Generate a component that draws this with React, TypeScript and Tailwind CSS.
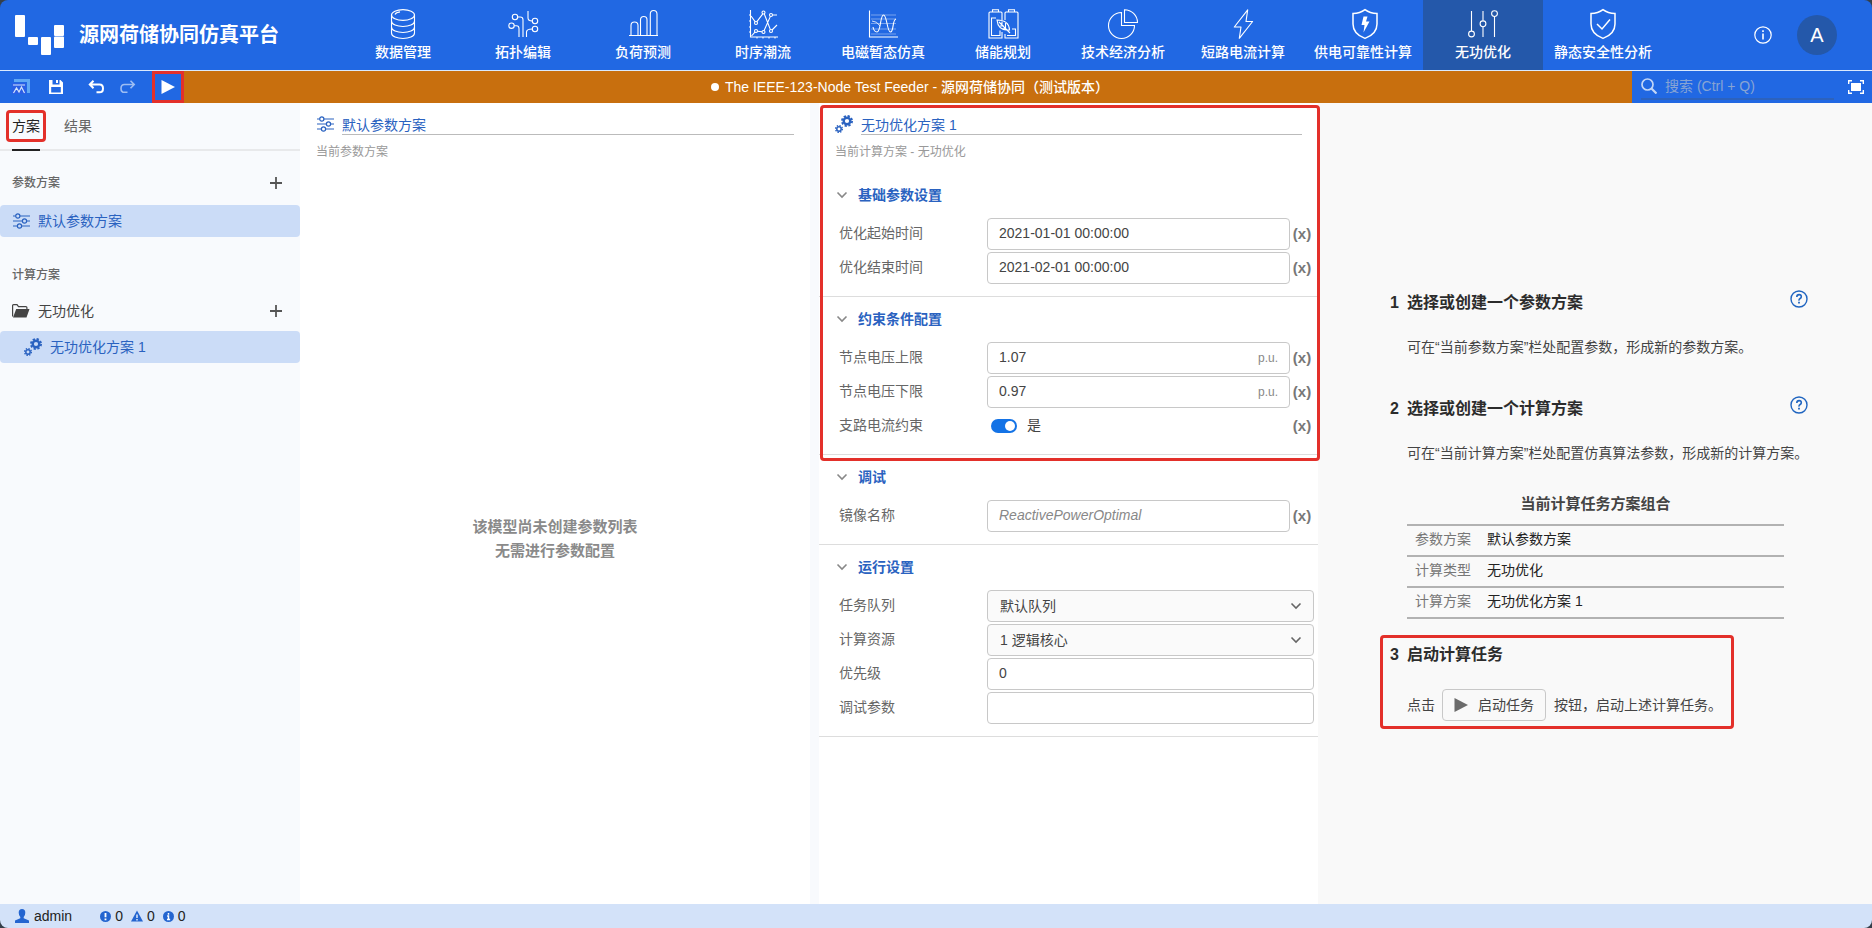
import { useState } from "react";
import type { ReactNode } from "react";

interface IconProps {
  className?: string;
}

const SlidersIcon = ({ className }: IconProps) => (
  <svg viewBox="0 0 18 18" fill="none" stroke="currentColor" strokeWidth="1.2" className={className}>
    <path d="M1 4h2.5M8 4h10M1 9h9M15 9h3M1 14h4M10 14h8" />
    <circle cx="5.8" cy="4" r="2.1" />
    <circle cx="12.5" cy="9" r="2.1" />
    <circle cx="7.5" cy="14" r="2.1" />
  </svg>
);

const GearsIcon = ({ className }: IconProps) => (
  <svg viewBox="0 0 18 18" fill="none" stroke="currentColor" className={className}>
    <circle cx="12" cy="6" r="3.3" strokeWidth="2.4" />
    <circle cx="12" cy="6" r="5.1" strokeWidth="1.8" strokeDasharray="2.3 1.705" />
    <circle cx="4" cy="14" r="2.2" strokeWidth="1.5" />
    <circle cx="4" cy="14" r="3.4" strokeWidth="1.3" strokeDasharray="1.4 1.27" />
  </svg>
);

const FolderIcon = ({ className }: IconProps) => (
  <svg viewBox="0 0 18 14" className={className}>
    <path d="M.6 12.5V1.6q0-1 1-1H5l1.500 2h7.400q1 0 1 1V5" fill="none" stroke="currentColor" strokeWidth="1.2" />
    <path d="M4.200 5H17.500L14.500 13.400H1z" fill="currentColor" />
  </svg>
);

const ChevronIcon = ({ className }: IconProps) => (
  <svg viewBox="0 0 12 8" fill="none" stroke="currentColor" strokeWidth="1.6" className={className}>
    <path d="M1.500 1.500 6 6l4.500-4.500" />
  </svg>
);

const PlusIcon = ({ className }: IconProps) => (
  <svg viewBox="0 0 12 12" stroke="currentColor" strokeWidth="1.8" className={className}>
    <path d="M6 0v12M0 6h12" />
  </svg>
);

const PlayIcon = ({ className }: IconProps) => (
  <svg viewBox="0 0 14 14" fill="currentColor" className={className}>
    <path d="M.5 0 14 7 .5 14z" />
  </svg>
);

const HelpIcon = ({ className }: IconProps) => (
  <svg viewBox="0 0 18 18" fill="none" stroke="currentColor" className={className}>
    <circle cx="9" cy="9" r="8" strokeWidth="1.4" />
    <path d="M6.800 7q0-2.400 2.300-2.400T11.300 6.700q0 1.100-1.200 1.800T9 10.600" strokeWidth="1.6" />
    <path d="M9 11.800v1.800" strokeWidth="1.8" />
  </svg>
);

const shield = "M15 .7Q20 4.500 27 4.500V15q0 10-12 14.400Q3 25 3 15V4.500Q10 4.500 15 .7z";

const modules: { label: string; icon: ReactNode }[] = [
  {
    label: "数据管理",
    icon: (
      <>
        <ellipse cx="15" cy="6" rx="11.5" ry="5.4" />
        <path d="M3.500 6v18c0 7.300 23 7.300 23 0V6M3.500 12c0 7.300 23 7.300 23 0M3.500 18c0 7.300 23 7.300 23 0" />
        <path d="M7 5.500q1-2 5-2.600" />
      </>
    ),
  },
  {
    label: "拓扑编辑",
    icon: (
      <>
        <circle cx="7" cy="8" r="2.7" />
        <circle cx="3.5" cy="16.7" r="2.7" />
        <circle cx="27" cy="12" r="2.7" />
        <circle cx="27" cy="20" r="2.7" />
        <path d="M9.700 8h2.500q2.800 0 2.800 2.800V28M6.200 16.700h2.300q2.500 0 2.500 2.800V28M20 2v7q0 3 4.300 3M18.500 28v-5q0-3 5.800-3" />
      </>
    ),
  },
  {
    label: "负荷预测",
    icon: (
      <path d="M1 26.500h29M3 26V16.500q0-3.500 3.500-3.500t3.500 3.500V26M12.500 26V11q0-3.500 3.300-3.500T19 11v15M22.300 26V5q0-3.500 3.300-3.500T29 5v21" />
    ),
  },
  {
    label: "时序潮流",
    icon: (
      <>
        <path d="M2.500 1v27H30M1 6h1.500M1 12h1.500M1 18h1.500M1 23h1.500M9 28v1.500M15 28v1.500M21 28v1.500M27 28v1.500" />
        <path d="M3 7l4.300 5.800M8.700 12.800 14.800 4.800M16.200 4.800l6.200 15.800M24 21l5-5M3.500 27l3.700-4.200M9.500 22.300l4.500.5M16 21.700l6.400-14.300M24.500 6H29" />
        <circle cx="8" cy="14" r="1.5" />
        <circle cx="15.5" cy="3.5" r="1.5" />
        <circle cx="23" cy="22" r="1.5" />
        <circle cx="8" cy="22" r="1.5" />
        <circle cx="15.5" cy="23" r="1.5" />
        <circle cx="23" cy="6" r="1.5" />
      </>
    ),
  },
  {
    label: "电磁暂态仿真",
    icon: (
      <>
        <path d="M1.500 1.500V28H30" />
        <path d="M3 6h25M3 10h25M3 14.500h25M3 20h25M3 25h25" strokeWidth=".4" />
        <path d="M5 18q1 5 4 5c4 0 3-17 6.500-17S19 23 22.500 23C26 23 24 11 28 10" />
        <path d="M4 12q5 0 8 5" strokeWidth=".8" />
      </>
    ),
  },
  {
    label: "储能规划",
    icon: (
      <>
        <path d="M14 11V4q0-1-1-1H2Q1 3 1 4v25h13v-6M4.500 3V.7h6V3M17 11V4q0-1 1-1h11q1 0 1 1v25H17v-4M20.500 3V.7h6V3" />
        <path d="M8 9H3.500v17.500H12v-5M19 26.500h8.500V20H24" />
        <path d="M9 11q12 0 12.500 10Q10 22 9 11zM11 13l11 11M14 12.500v4M12 17h4M17.500 14v5M14.500 19.700h4" />
      </>
    ),
  },
  {
    label: "技术经济分析",
    icon: <path d="M13.500 3.500a13 13 0 1 0 13 13h-13zM16.500.7A13 13 0 0 1 29.500 13.500h-13z" />,
  },
  {
    label: "短路电流计算",
    icon: <path d="M19.700.8 6.300 18H13l-1.700 11.300L24.600 12.500H18z" strokeLinejoin="round" />,
  },
  {
    label: "供电可靠性计算",
    icon: (
      <g transform="translate(2 0)">
        <path d={shield} strokeWidth="1.5" />
        <path d="M13.500 7.500h4L16 12.500h3.500L13.500 23.500l1-7.500H11.500z" fill="currentColor" stroke="none" />
      </g>
    ),
  },
  {
    label: "无功优化",
    icon: (
      <>
        <path d="M3.500 2v20M15 2v9.800M15 17.800V28M26.500 7.500V28" />
        <circle cx="3.5" cy="25" r="2.9" />
        <circle cx="15" cy="14.8" r="2.9" />
        <circle cx="26.5" cy="4.6" r="2.9" />
      </>
    ),
  },
  {
    label: "静态安全性分析",
    icon: (
      <>
        <path d={shield} strokeWidth="1.5" />
        <path d="m9 15 5 5 8-9.500" strokeWidth="1.5" />
      </>
    ),
  },
];

const Header = () => {
  const [active, setActive] = useState("无功优化");
  return (
    <header className="flex h-[71px] items-stretch justify-between border-b border-blue-100 bg-[#2168e3] text-white">
      <div className="flex w-[343px] items-center pl-[15px]">
        <svg viewBox="0 0 50 41" className="h-[41px] w-[50px]" fill="currentColor">
          <rect x="0" y="0" width="10" height="22" rx="1" />
          <rect x="13" y="22" width="10" height="8" rx="1" />
          <rect x="26" y="22" width="10" height="18" rx="1" />
          <rect x="39" y="10" width="10" height="11" rx="1" />
          <rect x="39" y="21.5" width="10" height="11.5" rx="1" />
        </svg>
        <h1 className="ml-3.5 text-xl font-bold">源网荷储协同仿真平台</h1>
      </div>
      <nav className="flex">
        {modules.map(({ label, icon }) => (
          <button
            key={label}
            type="button"
            onClick={() => setActive(label)}
            className={`flex w-[120px] flex-col items-center pt-[9px] ${
              active === label ? "bg-[#2458aa]" : "hover:bg-[#2458aa]/50"
            }`}
          >
            <svg viewBox="0 0 30 30" fill="none" stroke="currentColor" strokeWidth="1.1" className="size-[30px] overflow-visible">
              {icon}
            </svg>
            <span className="mt-[3px] text-sm font-medium">{label}</span>
          </button>
        ))}
      </nav>
      <div className="flex w-[209px] items-center justify-end gap-[25px] pr-[35px]">
        <button type="button" aria-label="关于">
          <svg viewBox="0 0 18 18" fill="none" stroke="currentColor" className="size-[18px]">
            <circle cx="9" cy="9" r="8.2" strokeWidth="1.2" />
            <path d="M9 7.500v6M9 4.300v1.800" strokeWidth="1.6" />
          </svg>
        </button>
        <button type="button" className="size-10 rounded-full bg-[#2458aa] text-xl">
          A
        </button>
      </div>
    </header>
  );
};

const Toolbar = () => (
  <div className="flex h-8 bg-[#c86f0e] text-white">
    <div className="flex w-[184px] items-center bg-[#2168e3] pl-3">
      <button type="button" aria-label="应用">
        <svg viewBox="0 0 18 16" className="h-4 w-[18px]">
          <path d="M2 0h16v14h-3V3H2z" fill="#5fa8f5" />
          <path d="M0 4h14v11H0z" fill="#2a5fe6" />
          <path d="M1 6h12M1.500 14l3-5 2.500 4 2.500-5 3 6" fill="none" stroke="#d5e4fb" strokeWidth="1.2" />
        </svg>
      </button>
      <button type="button" aria-label="保存" className="ml-[19px]">
        <svg viewBox="0 0 14 14" fill="currentColor" className="size-3.5">
          <path
            fillRule="evenodd"
            d="M0 0h11.500L14 2.500V14H0zM3.500 0v4.500h7V0H9v3H7V0zM2.200 7v5.500h9.600V7z"
          />
        </svg>
      </button>
      <button type="button" aria-label="撤销" className="ml-[25px]">
        <svg viewBox="0 0 16 14" fill="none" stroke="currentColor" strokeWidth="2" className="h-3.5 w-4">
          <path d="M5.500.8 1.800 4.500l3.700 3.700M2 4.500h9.500q3.500 0 3.500 3.900t-3.500 3.900H8.500" />
        </svg>
      </button>
      <button type="button" aria-label="重做" className="ml-4">
        <svg viewBox="0 0 16 14" fill="none" stroke="#9dbdf3" strokeWidth="1.6" className="h-3.5 w-4">
          <path d="M10.500.8l3.700 3.700-3.700 3.700M14 4.500H4.500Q1 4.500 1 8.400t3.500 3.900h3" />
        </svg>
      </button>
      <button
        type="button"
        aria-label="启动任务"
        className="ml-auto flex h-8 w-8 items-center justify-center border-[3px] border-[#e3302a]"
      >
        <PlayIcon className="size-3.5" />
      </button>
    </div>
    <div className="flex min-w-0 flex-1 items-center justify-center gap-1.5 pl-1 text-sm">
      <span className="size-2 rounded-full bg-white" />
      <span className="font-medium">The IEEE-123-Node Test Feeder - 源网荷储协同（测试版本）</span>
    </div>
    <div className="flex w-60 items-center bg-[#2168e3] pr-2 pl-[9px]">
      <label className="flex min-w-0 flex-1 items-center gap-2 border-b-2 border-[#2c62bd]">
        <svg viewBox="0 0 16 16" fill="none" stroke="#c3d6f6" strokeWidth="1.7" className="size-4 shrink-0">
          <circle cx="6.5" cy="6.5" r="5.5" />
          <path d="m10.500 10.500 5 5" strokeWidth="2.2" />
        </svg>
        <input
          type="search"
          aria-label="搜索"
          placeholder="搜索 (Ctrl + Q)"
          className="h-6 min-w-0 flex-1 bg-transparent text-sm outline-none placeholder:text-[#88a4d3]"
        />
      </label>
      <button type="button" aria-label="全屏" className="ml-3.5 shrink-0">
        <svg viewBox="0 0 16 14" fill="none" stroke="currentColor" strokeWidth="1.4" className="h-3.5 w-4">
          <path d="M.7 4V.7H4M12 .7h3.300V4M15.300 10v3.300H12M4 13.300H.7V10" />
          <rect x="3" y="3" width="10" height="8" fill="currentColor" stroke="none" />
        </svg>
      </button>
    </div>
  </div>
);

const Sidebar = () => (
  <aside className="bg-[#f8fafd] text-sm text-[#444]">
    <div className="flex h-12 gap-6 border-b-2 border-[#e8e9eb] pl-3">
      <button type="button" className="relative -mb-0.5 border-b-2 border-[#222] text-[#222]">
        方案
        <span className="pointer-events-none absolute -inset-x-1.5 top-[7px] h-8 rounded-sm border-[3px] border-[#e3302a]" />
      </button>
      <button type="button" className="text-[#666]">
        结果
      </button>
    </div>
    <div className="mt-4 flex h-8 items-center justify-between pr-[18px] pl-3">
      <h2 className="text-xs font-medium text-[#666]">参数方案</h2>
      <button type="button" aria-label="新建参数方案">
        <PlusIcon className="size-3 text-[#555]" />
      </button>
    </div>
    <button type="button" className="mt-1.5 flex h-8 w-full items-center gap-2 rounded bg-[#cbdcf7] pl-3 text-[#2a62c0]">
      <SlidersIcon className="size-[18px]" />
      默认参数方案
    </button>
    <h2 className="mt-[22px] flex h-8 items-center pl-3 text-xs font-medium text-[#666]">计算方案</h2>
    <div className="mt-1 flex h-8 items-center justify-between pr-[18px] pl-3">
      <button type="button" className="flex items-center gap-2">
        <FolderIcon className="h-3.5 w-[18px]" />
        无功优化
      </button>
      <button type="button" aria-label="新建计算方案">
        <PlusIcon className="size-3 text-[#555]" />
      </button>
    </div>
    <button type="button" className="mt-1 flex h-8 w-full items-center gap-2 rounded bg-[#cbdcf7] pl-6 text-[#2a62c0]">
      <GearsIcon className="size-[18px]" />
      无功优化方案 1
    </button>
  </aside>
);

interface PanelTitleProps {
  icon: ReactNode;
  label: string;
  name: string;
  note: string;
}

const PanelTitle = ({ icon, label, name, note }: PanelTitleProps) => (
  <div className="h-[70px] px-4 pt-2.5">
    <div className="flex items-center gap-2 text-[#2a62c0]">
      {icon}
      <input
        aria-label={label}
        defaultValue={name}
        className="h-[22px] min-w-0 flex-1 border-b border-[#bbb] text-sm outline-none"
      />
    </div>
    <p className="mt-[7px] text-xs leading-5 text-[#999]">{note}</p>
  </div>
);

interface SectionProps {
  title: string;
  children: ReactNode;
}

const Section = ({ title, children }: SectionProps) => (
  <section className="border-b border-[#ddd] pt-1.5 pr-1 pb-3">
    <button type="button" className="mb-[7px] flex h-8 items-center gap-2.5 pl-[17px]">
      <ChevronIcon className="h-2 w-3 text-[#888]" />
      <span className="text-sm font-bold text-[#2a62c0]">{title}</span>
    </button>
    <div className="flex flex-col gap-0.5 pl-5">{children}</div>
  </section>
);

interface FieldProps {
  id: string;
  label: string;
  value?: string;
  placeholder?: string;
  unit?: string;
  expr?: boolean;
}

const ExprButton = () => (
  <button type="button" aria-label="表达式" className="w-6 shrink-0 text-center text-[15px] font-bold text-[#777]">
    (x)
  </button>
);

const Field = ({ id, label, value, placeholder, unit, expr }: FieldProps) => (
  <div className="flex h-8 items-center">
    <label htmlFor={id} className="w-[148px] shrink-0 pb-0.5 text-sm text-[#666]">
      {label}
    </label>
    <div className="flex h-8 min-w-0 flex-1 items-center rounded border border-[#c8c8c8] bg-white px-[11px]">
      <input
        id={id}
        defaultValue={value}
        placeholder={placeholder}
        className="h-full min-w-0 flex-1 pb-0.5 text-sm text-[#444] outline-none placeholder:text-[#888] placeholder:italic"
      />
      {unit && <span className="text-xs text-[#888]">{unit}</span>}
    </div>
    {expr && <ExprButton />}
  </div>
);

const SelectField = ({ id, label, value }: { id: string; label: string; value: string }) => (
  <div className="flex h-8 items-center">
    <label htmlFor={id} className="w-[148px] shrink-0 pb-0.5 text-sm text-[#666]">
      {label}
    </label>
    <div className="relative flex-1">
      <select
        id={id}
        className="block h-8 w-full appearance-none rounded border border-[#c8c8c8] bg-[#fafafa] px-3 text-sm text-[#444]"
      >
        <option>{value}</option>
      </select>
      <ChevronIcon className="pointer-events-none absolute top-3 right-3 h-2 w-3 text-[#666]" />
    </div>
  </div>
);

const ToggleField = ({ id, label }: { id: string; label: string }) => {
  const [on, setOn] = useState(true);
  return (
    <div className="flex h-8 items-center">
      <label htmlFor={id} className="w-[152px] shrink-0 pb-0.5 text-sm text-[#666]">
        {label}
      </label>
      <input
        id={id}
        type="checkbox"
        checked={on}
        onChange={() => setOn(!on)}
        className="h-3.5 w-[26px] appearance-none rounded-full bg-[#aaa] before:m-0.5 before:block before:size-2.5 before:rounded-full before:bg-white checked:bg-[#1473e6] checked:before:ml-3.5"
      />
      <span className="ml-2.5 flex-1 pb-0.5 text-sm text-[#444]">{on ? "是" : "否"}</span>
      <ExprButton />
    </div>
  );
};

const ParamPanel = () => (
  <section className="flex flex-col border-r-[9px] border-[#f8fafd] bg-white">
    <PanelTitle
      icon={<SlidersIcon className="size-[18px]" />}
      label="参数方案名称"
      name="默认参数方案"
      note="当前参数方案"
    />
    <div className="flex flex-1 flex-col items-center justify-center text-[15px] leading-6 font-bold text-[#8a8a8a]">
      <p>该模型尚未创建参数列表</p>
      <p>无需进行参数配置</p>
    </div>
  </section>
);

const JobPanel = () => (
  <section className="bg-white">
    <div className="relative">
      <PanelTitle
        icon={<GearsIcon className="size-[18px]" />}
        label="计算方案名称"
        name="无功优化方案 1"
        note="当前计算方案 - 无功优化"
      />
      <Section title="基础参数设置">
        <Field id="start" label="优化起始时间" value="2021-01-01 00:00:00" expr />
        <Field id="end" label="优化结束时间" value="2021-02-01 00:00:00" expr />
      </Section>
      <Section title="约束条件配置">
        <Field id="vmax" label="节点电压上限" value="1.07" unit="p.u." expr />
        <Field id="vmin" label="节点电压下限" value="0.97" unit="p.u." expr />
        <ToggleField id="branch" label="支路电流约束" />
      </Section>
      <div className="pointer-events-none absolute top-0.5 -right-0.5 -bottom-1.5 left-px rounded-sm border-[3px] border-[#e3302a]" />
    </div>
    <Section title="调试">
      <Field id="image" label="镜像名称" placeholder="ReactivePowerOptimal" expr />
    </Section>
    <Section title="运行设置">
      <SelectField id="queue" label="任务队列" value="默认队列" />
      <SelectField id="cpu" label="计算资源" value="1 逻辑核心" />
      <Field id="priority" label="优先级" value="0" />
      <Field id="args" label="调试参数" />
    </Section>
  </section>
);

const summary = [
  ["参数方案", "默认参数方案"],
  ["计算类型", "无功优化"],
  ["计算方案", "无功优化方案 1"],
];

const StepTitle = ({ step, title, help }: { step: number; title: string; help?: boolean }) => (
  <div className="flex h-6 items-center text-base font-bold text-[#2c2c2c]">
    <span className="w-[17px]">{step}</span>
    <h3 className="flex-1">{title}</h3>
    {help && (
      <button type="button" aria-label="帮助" className="mb-2">
        <HelpIcon className="size-[18px] text-[#2065c0]" />
      </button>
    )}
  </div>
);

const Guide = () => (
  <section className="flex flex-col justify-center bg-[#f9f9f9] pt-1 pr-16 pl-[72px] text-sm text-[#444]">
    <StepTitle step={1} title="选择或创建一个参数方案" help />
    <p className="mt-[22px] pl-[17px] whitespace-nowrap">可在“当前参数方案”栏处配置参数，形成新的参数方案。</p>
    <div className="mt-10">
      <StepTitle step={2} title="选择或创建一个计算方案" help />
    </div>
    <p className="mt-[22px] pl-[17px] whitespace-nowrap">可在“当前计算方案”栏处配置仿真算法参数，形成新的计算方案。</p>
    <div className="mt-[31px] pr-6 pl-[17px]">
      <table className="w-full border-collapse">
        <caption className="pb-2.5 text-[15px] leading-5 font-bold">当前计算任务方案组合</caption>
        <tbody>
          {summary.map(([key, value]) => (
            <tr key={key} className="h-[31px] border-y-2 border-[#b2b2b2]">
              <th scope="row" className="w-20 pb-0.5 pl-2 text-left font-normal text-[#777]">
                {key}
              </th>
              <td className="pb-0.5 text-[#222]">{value}</td>
            </tr>
          ))}
        </tbody>
      </table>
    </div>
    <div className="relative mt-6 self-start">
      <StepTitle step={3} title="启动计算任务" />
      <div className="mt-[22px] flex h-8 items-center pr-0.5 pl-[17px]">
        点击
        <button
          type="button"
          className="mr-2 ml-[7px] flex h-8 items-center gap-2.5 rounded border border-[#c8c8c8] px-[11px] text-[#444]"
        >
          <PlayIcon className="size-3.5 text-[#6b6b6b]" />
          启动任务
        </button>
        按钮，启动上述计算任务。
      </div>
      <div className="pointer-events-none absolute -inset-x-2.5 -inset-y-2 rounded-sm border-[3px] border-[#e3302a]" />
    </div>
  </section>
);

const StatusBar = () => (
  <footer className="flex h-6 items-center bg-[#d3e2f9] pl-[15px] text-sm text-[#222]">
    <svg viewBox="0 0 14 14" fill="#2465d0" className="size-3.5">
      <path d="M7 0Q10.300 0 10.300 3.700 10.300 6.500 8.700 8v1.200L14 11.500V14H0v-2.500L5.300 9.200V8Q3.700 6.500 3.700 3.700 3.700 0 7 0z" />
    </svg>
    <span className="ml-[5px] mr-7">admin</span>
    <svg viewBox="0 0 12 12" className="size-[11px]">
      <circle cx="6" cy="6" r="6" fill="#2465d0" />
      <path d="M6 2.200v4.600M6 8.200v1.800" stroke="#fff" strokeWidth="2" />
    </svg>
    <span className="mr-2 ml-1">0</span>
    <svg viewBox="0 0 12 12" className="size-3">
      <path d="M6 .5 12 11.500H0z" fill="#2465d0" />
      <path d="M6 4.500v3.500M6 9v1.500" stroke="#fff" strokeWidth="1.3" />
    </svg>
    <span className="mr-2 ml-1">0</span>
    <svg viewBox="0 0 12 12" className="size-[11px]">
      <circle cx="6" cy="6" r="6" fill="#2465d0" />
      <path d="M6 2.200v1.800M4.500 5.500H6v4M4.300 9.300h3.500" fill="none" stroke="#fff" strokeWidth="1.6" />
    </svg>
    <span className="ml-1">0</span>
  </footer>
);

const App = () => (
  <div className="min-h-screen bg-[#353f4a]">
    <div className="flex min-h-screen flex-col overflow-hidden rounded-lg font-['Liberation_Sans','Noto_Sans_CJK_SC',sans-serif]">
      <Header />
      <Toolbar />
      <main className="grid flex-1 grid-cols-[300px_minmax(0,1fr)_499px_554px]">
        <Sidebar />
        <ParamPanel />
        <JobPanel />
        <Guide />
      </main>
      <StatusBar />
    </div>
  </div>
);

export default App;
